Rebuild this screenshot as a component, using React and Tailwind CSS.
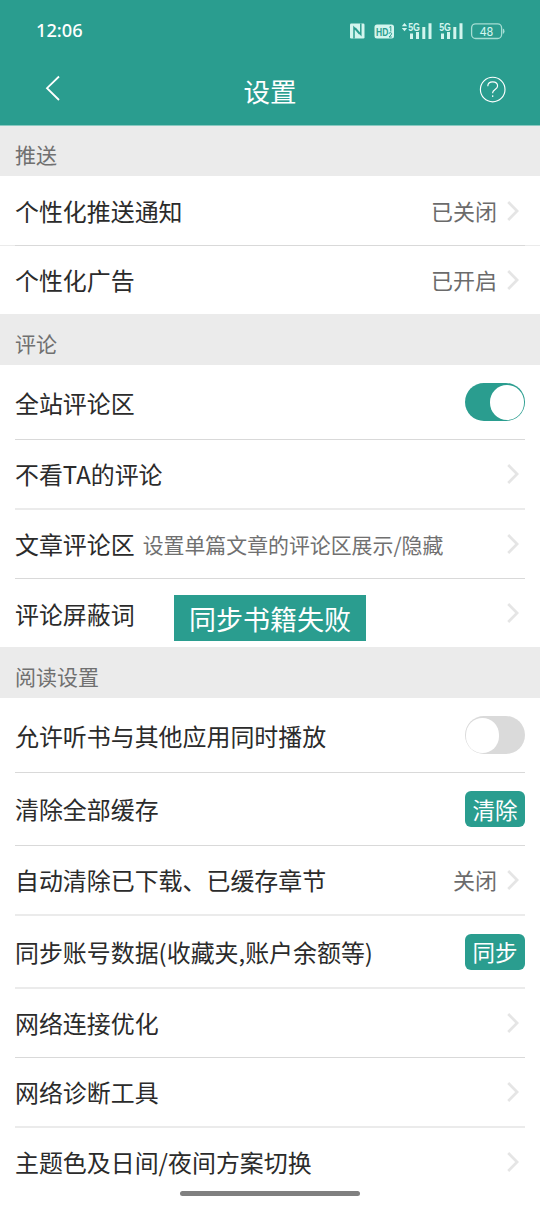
import React from "react";

const FONT = "font-['Noto_Sans_CJK_SC',sans-serif]";

function StatusIcons() {
  return (
    <svg width="160" height="20" viewBox="350 21 160 20" fill="#d3f5ee">
      <rect x="350" y="23.5" width="14.5" height="15" rx="1.2" />
      <path d="M354 38.500V27.500l5.600 6.500M360.800 23.500v11l-5.600-6.500" fill="none" stroke="#2a9d8f" strokeWidth="1.500" />
      <rect x="374.5" y="24.5" width="19.5" height="14" rx="2.5" />
      <text x="376" y="35.6" fontSize="11.500" fontWeight="700" fill="#2a9d8f" className="font-['Liberation_Sans',sans-serif]" textLength="12.300" lengthAdjust="spacingAndGlyphs">HD</text>
      <path d="M389.300 27.300l1.500-1v5.200M389 33.800q0-1.200 1.300-1.200t1.300 1.100q0 1-2.600 3.300h2.800" fill="none" stroke="#2a9d8f" strokeWidth="1" />
      <path d="M401.800 26.300l2.700-3.300 2.700 3.300zM401.800 27.900h5.400l-2.700 3.300z" />
      {[0, 31].map((dx) => (
        <g key={dx} transform={`translate(${dx} 0)`}>
          <text x="408.200" y="31.200" fontSize="11.300" fontWeight="700" className="font-['Liberation_Sans',sans-serif]" textLength="11.800" lengthAdjust="spacingAndGlyphs">5G</text>
          <path d="M410 33.500h3v5.500h-3zM416 32h3v7h-3zM422.300 27h3v12h-3zM428.500 23.300h3v15.700h-3z" />
        </g>
      ))}
      <rect x="471.600" y="23.900" width="30" height="14.600" rx="4" fill="none" stroke="#a5ddd3" strokeWidth="1.300" />
      <path d="M502.800 28.500q1.700.300 1.700 2.700t-1.700 2.700z" fill="#a5ddd3" />
      <text x="486.500" y="35.600" fontSize="12" textAnchor="middle" className="font-['Roboto',sans-serif]">48</text>
    </svg>
  );
}

function Chevron() {
  return (
    <svg className="mr-[5px] ml-[10px] shrink-0" width="13" height="22" viewBox="0 0 13 22" fill="none" stroke="#e5e5e5" strokeWidth="2.7">
      <path d="M1.200 2l8.900 9-8.900 9" />
    </svg>
  );
}

function Toggle({ on }) {
  return (
    <div className={`flex h-[38px] w-[60px] items-center rounded-full px-px ${on ? "justify-end bg-[#2a9d8f]" : "bg-[#dadada]"}`}>
      <div className={`rounded-full bg-white ${on ? "h-[35px] w-[34px]" : "h-[35px] w-[33px]"}`} />
    </div>
  );
}

function ActionButton({ children }) {
  return (
    <button className="h-[36px] w-[60px] rounded-[6px] bg-[#2a9d8f] text-[22.500px] leading-[35px] text-white">
      {children}
    </button>
  );
}

function Section({ className, children }) {
  return (
    <h2 className={`bg-[#ebebeb] px-[15px] text-[21px] leading-[31px] font-normal text-[#707070] ${className}`}>
      {children}
    </h2>
  );
}

const LINES = {
  thin: "border-b border-[#d9d9d9]",
  soft: "border-b-2 border-[#ebebeb]",
  none: "",
};

function Row({ label, hint, value, control, height, line = "thin", labelPad = "" }) {
  return (
    <div className={`mx-[15px] flex items-center ${height} ${LINES[line]}`}>
      <span className={`text-[23.950px] leading-[36px] whitespace-nowrap text-[#2b2b2b] ${labelPad}`}>{label}</span>
      {hint && <span className="ml-[8px] text-[20.900px] leading-[36px] whitespace-nowrap text-[#707070]">{hint}</span>}
      <div className="ml-auto flex items-center">
        {value && <span className="-mt-[2px] text-[22px] leading-[32px] text-[#6b6b6b]">{value}</span>}
        {control || <Chevron />}
      </div>
    </div>
  );
}

export default function App() {
  return (
    <div className={`relative h-[1206px] w-[540px] overflow-hidden bg-white ${FONT}`}>
      <header className="h-[126px] border-b border-[#8ac9c1] bg-[#2a9d8f] text-white">
        <div className="flex h-[62px] items-center justify-between pr-[30px] pl-[36px]">
          <span className="font-['Noto_Sans',sans-serif] text-[18.200px] font-medium">12:06</span>
          <StatusIcons />
        </div>
        <div className="grid h-[58px] grid-cols-3 items-center pr-[34px] pl-[34px]">
          <svg className="-mt-[6px] ml-[11px]" width="26" height="26" viewBox="0 0 26 26" fill="none" stroke="white" strokeWidth="1.800">
            <path d="M14 1.500L2 13.200 14 25" />
          </svg>
          <h1 className="text-center text-[26.500px] leading-[40px] font-normal">设置</h1>
          <svg className="-mt-[3px] ml-auto" width="27" height="27" viewBox="0 0 27 27" fill="none" stroke="white" strokeWidth="1.150">
            <circle cx="13.700" cy="13.500" r="12.300" />
            <path d="M8.800 10.200c0-2.700 2-4.300 4.900-4.300s4.900 1.600 4.900 4.100c0 3.300-4.900 3.500-4.900 6.600v.700M13.700 19.300v1.700" />
          </svg>
        </div>
      </header>

      <Section className="h-[50px] pt-[13px]">推送</Section>
      <div className="flex items-end">
        <div className="-mr-[15px] h-px w-[15px] shrink-0 bg-[#ebebeb]" />
        <div className="grow">
          <Row label="个性化推送通知" value="已关闭" height="h-[70px]" />
        </div>
        <div className="-ml-[15px] h-px w-[15px] shrink-0 bg-[#ebebeb]" />
      </div>
      <Row label="个性化广告" value="已开启" height="h-[68px]" line="none" />

      <Section className="h-[51px] pt-[14px]">评论</Section>
      <Row label="全站评论区" control={<Toggle on />} height="h-[75px]" labelPad="pt-[2px]" />
      <Row label="不看TA的评论" height="h-[70px]" line="soft" />
      <Row label="文章评论区" hint="设置单篇文章的评论区展示/隐藏" height="h-[69px]" />
      <Row label="评论屏蔽词" height="h-[68px]" line="none" labelPad="pt-[2px]" />

      <Section className="h-[51px] pt-[14px]">阅读设置</Section>
      <Row label="允许听书与其他应用同时播放" control={<Toggle />} height="h-[75px]" labelPad="pt-[2px]" />
      <Row label="清除全部缓存" control={<ActionButton>清除</ActionButton>} height="h-[73px]" />
      <Row label="自动清除已下载、已缓存章节" value="关闭" height="h-[70px]" line="soft" />
      <Row label="同步账号数据(收藏夹,账户余额等)" control={<ActionButton>同步</ActionButton>} height="h-[73px]" line="soft" />
      <Row label="网络连接优化" height="h-[69px]" />
      <Row label="网络诊断工具" height="h-[70px]" line="soft" />
      <Row label="主题色及日间/夜间方案切换" height="h-[68px]" line="none" />

      <div className="absolute top-[595px] left-[174px] h-[46px] w-[192px] bg-[#2a9d8f] pt-px text-center text-[27px] leading-[46px] whitespace-nowrap text-white">
        同步书籍失败
      </div>
      <div className="absolute top-[1191px] left-[180px] h-[5px] w-[180px] rounded-full bg-[#808080]" />
    </div>
  );
}
